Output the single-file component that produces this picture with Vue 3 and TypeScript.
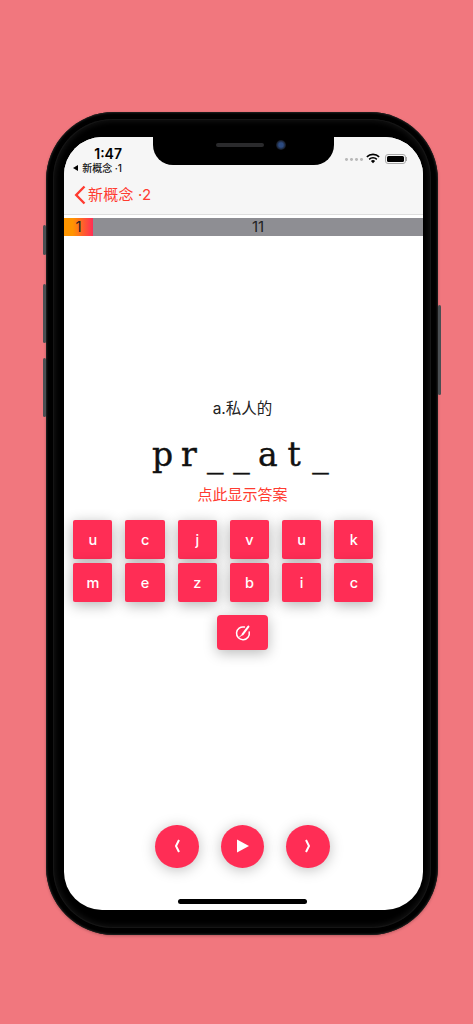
<script setup lang="ts">
const rows: string[][] = [
  ['u', 'c', 'j', 'v', 'u', 'k'],
  ['m', 'e', 'z', 'b', 'i', 'c'],
]
const letters: string[] = ['p', 'r', '_', '_', 'a', 't', '_']
</script>

<template>
  <div class="page">
    <div class="phone">
      <i class="side s1"></i><i class="side s2"></i><i class="side s3"></i><i class="side s4"></i>
      <div class="bezel">
        <div class="screen">
          <div class="notch">
            <span class="speaker"></span>
            <span class="camera"></span>
          </div>
          <header class="header">
            <div class="status">
              <div class="status-left">
                <div class="time">1:47</div>
                <div class="back-app"><span class="tri"></span>新概念 ·1</div>
              </div>
              <div class="status-right">
                <div class="dots"><i></i><i></i><i></i><i></i></div>
                <svg class="wifi" width="14" height="11" viewBox="0 0 15 11">
                  <path d="M7.5 10.6 5.2 8.2a3.2 3.2 0 0 1 4.6 0Z" fill="#000" />
                  <path d="M3.4 6.4a5.8 5.8 0 0 1 8.2 0" fill="none" stroke="#000" stroke-width="1.7" />
                  <path d="M.9 3.8a9.4 9.4 0 0 1 13.2 0" fill="none" stroke="#000" stroke-width="1.7" />
                </svg>
                <div class="battery"><span class="cell"></span></div>
                <span class="nub"></span>
              </div>
            </div>
            <div class="nav">
              <svg width="12" height="20" viewBox="0 0 12 20">
                <path d="M10.5 1.5 2.2 10l8.3 8.5" fill="none" stroke="#ff3b30" stroke-width="2.4" />
              </svg>
              <span class="nav-title">新概念 ·2</span>
            </div>
          </header>
          <div class="progress">
            <div class="done">1</div>
            <div class="left">11</div>
          </div>
          <main class="main">
            <div class="meaning">a.私人的</div>
            <div class="word">
              <span v-for="(c, i) in letters" :key="i" class="letter">{{ c }}</span>
            </div>
            <div class="hint">点此显示答案</div>
            <div class="keys">
              <div v-for="(row, r) in rows" :key="r" class="row">
                <button v-for="(k, i) in row" :key="i" class="key">{{ k }}</button>
              </div>
            </div>
            <button class="erase">
              <svg width="18" height="18" viewBox="0 0 18 18">
                <path d="M10.4 3.1a6.4 6.4 0 1 0 4.8 4.9" fill="none" stroke="#fff" stroke-width="1.5" stroke-linecap="round" />
                <path d="M5.6 12.8 8.2 10.8" fill="none" stroke="#fff" stroke-width="1" stroke-linecap="round" />
                <path d="M8.6 10.4 14.4 2.6" fill="none" stroke="#fff" stroke-width="2.1" stroke-linecap="round" />
              </svg>
            </button>
            <div class="controls">
              <button class="round">
                <svg width="8" height="14" viewBox="0 0 8 14"><path d="M6 1 3 7 6 13" fill="none" stroke="#fff" stroke-width="2" /></svg>
              </button>
              <button class="round play">
                <svg width="14" height="14" viewBox="0 0 14 14"><path d="M1 0.5 13 7 1 13.5Z" fill="#fff" /></svg>
              </button>
              <button class="round">
                <svg width="8" height="14" viewBox="0 0 8 14"><path d="M2 1 5 7 2 13" fill="none" stroke="#fff" stroke-width="2" /></svg>
              </button>
            </div>
            <div class="home"></div>
          </main>
        </div>
      </div>
    </div>
  </div>
</template>

<style>
html, body { margin: 0; padding: 0; background: #f1777e; }
</style>

<style scoped>
.page {
  width: 473px;
  height: 1024px;
  box-sizing: border-box;
  padding: 112px 0 0 46px;
  background: #f1777e;
  overflow: hidden;
  font-family: Inter, "Noto Sans CJK SC", sans-serif;
}
.phone {
  position: relative;
  width: 392px;
  height: 823px;
  box-sizing: border-box;
  padding: 7px;
  background: #000;
  border-radius: 68px;
  box-shadow: inset 0 0 2px 1px #222, 0 1px 3px rgba(0, 0, 0, 0.25);
}
.bezel {
  height: 100%;
  box-sizing: border-box;
  padding: 18px 8px 18px 11px;
  background: #000;
  border-radius: 60px;
  box-shadow: inset 0 0 0 1px #151515, inset 0 0 5px 3px #101010;
}
.side { position: absolute; background: #4a4e52; border-radius: 2px; width: 3px; }
.s1 { left: -3px; top: 113px; height: 30px; }
.s2 { left: -3px; top: 172px; height: 59px; }
.s3 { left: -3px; top: 246px; height: 59px; }
.s4 { right: -3px; top: 193px; height: 90px; }
.screen {
  position: relative;
  width: 359px;
  height: 773px;
  display: flex;
  flex-direction: column;
  background: #fff;
  border-radius: 38px;
  overflow: hidden;
}
.notch {
  position: absolute;
  left: 89px;
  top: 0;
  width: 181px;
  height: 28px;
  background: #000;
  border-radius: 0 0 20px 20px;
}
.speaker {
  position: absolute;
  left: 63px;
  top: 6px;
  width: 48px;
  height: 4px;
  border-radius: 3px;
  background: #2a2a2c;
}
.camera {
  position: absolute;
  left: 123px;
  top: 3px;
  width: 10px;
  height: 10px;
  border-radius: 50%;
  background: radial-gradient(circle, #2c4a80 30%, #14161c 70%);
}
.header {
  height: 78px;
  flex: none;
  box-sizing: border-box;
  background: #f6f6f6;
  border-bottom: 1px solid #dedede;
}
.status {
  height: 38px;
  display: flex;
  justify-content: space-between;
  padding: 9px 16px 0 0;
  box-sizing: border-box;
}
.status-left { width: 58px; display: flex; flex-direction: column; align-items: flex-end; }
.time {
  font-size: 14px;
  font-weight: 600;
  line-height: 15px;
  color: #000;
}
.back-app {
  display: flex;
  align-items: center;
  font-size: 10px;
  line-height: 12px;
  margin-top: 1px;
  font-weight: 500;
  color: #111;
  white-space: nowrap;
}
.tri {
  width: 0;
  height: 0;
  border-style: solid;
  border-width: 3px 5px 3px 0;
  border-color: transparent #000 transparent transparent;
  margin-right: 4px;
}
.status-right { display: flex; align-items: flex-start; padding-top: 7px; }
.dots { display: flex; gap: 2px; margin-top: 5px; margin-right: 3px; }
.dots i { width: 2.8px; height: 2.8px; border-radius: 50%; background: #b9b9b9; }
.wifi { margin-right: 5px; }
.battery {
  width: 21px;
  height: 10px;
  margin-top: 1px;
  box-sizing: border-box;
  padding: 1px;
  border: 1px solid #a8a8a8;
  border-radius: 3px;
}
.cell { display: block; height: 100%; border-radius: 1.5px; background: #000; }
.nub { width: 1.5px; height: 4px; margin-top: 4px; background: #a8a8a8; }
.nav {
  height: 38px;
  display: flex;
  align-items: center;
  padding: 2px 0 0 10px;
  gap: 2px;
  box-sizing: border-box;
}
.nav-title { font-size: 15px; letter-spacing: 0.2px; color: #ff3b30; line-height: 20px; }
.progress {
  margin-top: 3px;
  height: 18px;
  flex: none;
  display: flex;
  font-size: 15px;
  line-height: 18px;
  text-align: center;
  color: #222;
}
.done { width: 29px; background: linear-gradient(90deg, #ff9500, #ff9500 30%, #ff2d55); }
.left { flex: 1; background: #8e8e93; }
.main {
  flex: 1;
  display: flex;
  flex-direction: column;
  align-items: center;
  min-height: 0;
}
.meaning {
  margin-top: 164px;
  margin-right: 2px;
  font-size: 15.5px;
  line-height: 18px;
  color: #222;
}
.word {
  margin-top: 17px;
  display: flex;
  margin-right: 4px;
  font-family: "DejaVu Serif", serif;
  font-size: 33px;
  line-height: 40px;
  color: #111;
  -webkit-text-stroke: 0.4px #111;
}
.letter { width: 26.3px; text-align: center; }
.hint {
  margin-top: 10px;
  margin-right: 2px;
  font-size: 15px;
  line-height: 20px;
  color: #ff3b30;
}
.keys {
  align-self: flex-start;
  margin: 15px 0 0 9.3px;
  display: flex;
  flex-direction: column;
  gap: 4.3px;
}
.row { display: flex; gap: 13px; }
button {
  border: 0;
  padding: 0;
  margin: 0;
  color: #fff;
  background: #ff2d55;
  font-family: Inter, sans-serif;
  display: flex;
  align-items: center;
  justify-content: center;
}
.key {
  width: 39.2px;
  height: 39px;
  border-radius: 2px;
  font-size: 14.5px;
  font-weight: 500;
  box-shadow: 0 3px 14px rgba(0, 0, 0, 0.3);
}
.erase {
  margin-top: 13px;
  margin-right: 2px;
  width: 51.5px;
  height: 34.5px;
  border-radius: 4px;
  box-shadow: 0 3px 14px rgba(0, 0, 0, 0.28);
}
.controls {
  margin-top: auto;
  display: flex;
  gap: 22px;
  margin-right: 2px;
}
.round {
  width: 43.4px;
  height: 43.4px;
  border-radius: 50%;
  box-shadow: 0 2px 14px rgba(0, 0, 0, 0.25);
}
.play svg { margin-left: 1px; }
.home {
  margin: 31px 0 6px;
  margin-right: 2px;
  width: 129px;
  height: 5px;
  border-radius: 3px;
  background: #000;
}
</style>
